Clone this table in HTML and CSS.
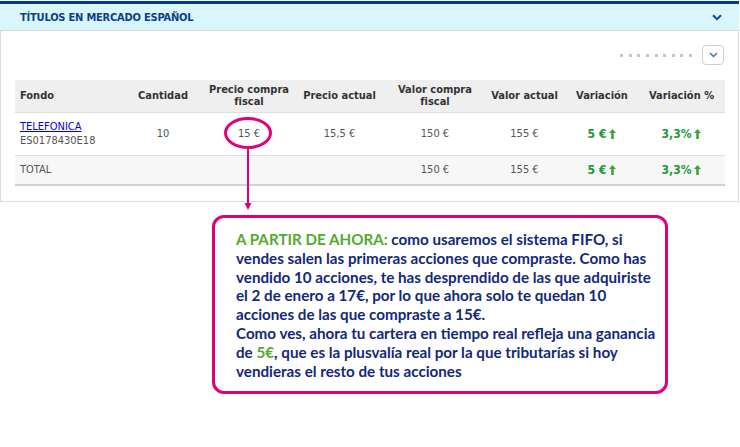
FILE: index.html
```html
<!DOCTYPE html>
<html lang="es">
<head>
<meta charset="utf-8">
<title>Títulos en mercado español</title>
<link rel="stylesheet" href="styles.css">
</head>
<body>
<div class="page">
  <section class="panel">
    <header class="panel-head">
      <h2 class="panel-title">TÍTULOS EN MERCADO ESPAÑOL</h2>
      <svg class="head-chevron" width="10" height="7" viewBox="0 0 10 7"><path d="M1 1.2 L5 5.2 L9 1.2" fill="none" stroke="#0a4a9c" stroke-width="2"/></svg>
    </header>
    <div class="panel-body">
      <div class="tools">
        <div class="dots"><span></span><span></span><span></span><span></span><span></span><span></span><span></span><span></span><span></span></div>
        <div class="drop"><svg width="9" height="6" viewBox="0 0 9 6"><path d="M1 1 L4.5 4.5 L8 1" fill="none" stroke="#3a6fb0" stroke-width="1.4"/></svg></div>
      </div>
      <table class="grid">
        <colgroup>
          <col class="c1"><col class="c2"><col class="c3"><col class="c4"><col class="c5"><col class="c6"><col class="c7"><col class="c8">
        </colgroup>
        <thead>
          <tr>
            <th class="left">Fondo</th>
            <th>Cantidad</th>
            <th>Precio compra<br>fiscal</th>
            <th>Precio actual</th>
            <th>Valor compra<br>fiscal</th>
            <th>Valor actual</th>
            <th>Variación</th>
            <th>Variación %</th>
          </tr>
        </thead>
        <tbody>
          <tr class="row-main">
            <td class="left"><a href="#" class="fund">TELEFONICA</a><div class="isin">ES0178430E18</div></td>
            <td>10</td>
            <td>15 €</td>
            <td>15,5 €</td>
            <td>150 €</td>
            <td>155 €</td>
            <td class="up">5 €<svg class="arrow" width="7" height="10" viewBox="0 0 7 10"><path d="M3.5 0 L7 4 L4.8 4 L4.8 10 L2.2 10 L2.2 4 L0 4 Z" fill="#3fa535"/></svg></td>
            <td class="up">3,3%<svg class="arrow" width="7" height="10" viewBox="0 0 7 10"><path d="M3.5 0 L7 4 L4.8 4 L4.8 10 L2.2 10 L2.2 4 L0 4 Z" fill="#3fa535"/></svg></td>
          </tr>
          <tr class="row-total">
            <td class="left">TOTAL</td>
            <td></td>
            <td></td>
            <td></td>
            <td>150 €</td>
            <td>155 €</td>
            <td class="up">5 €<svg class="arrow" width="7" height="10" viewBox="0 0 7 10"><path d="M3.5 0 L7 4 L4.8 4 L4.8 10 L2.2 10 L2.2 4 L0 4 Z" fill="#3fa535"/></svg></td>
            <td class="up">3,3%<svg class="arrow" width="7" height="10" viewBox="0 0 7 10"><path d="M3.5 0 L7 4 L4.8 4 L4.8 10 L2.2 10 L2.2 4 L0 4 Z" fill="#3fa535"/></svg></td>
          </tr>
        </tbody>
      </table>
    </div>
  </section>

  <div class="callout">
    <p><span class="hl">A PARTIR DE AHORA:</span> como usaremos el sistema FIFO, si<br>vendes salen las primeras acciones que compraste. Como has<br>vendido 10 acciones, te has desprendido de las que adquiriste<br>el 2 de enero a 17€, por lo que ahora solo te quedan 10<br>acciones de las que compraste a 15€.</p>
    <p>Como ves, ahora tu cartera en tiempo real refleja una ganancia<br>de <span class="hl">5€</span>, que es la plusvalía real por la que tributarías si hoy<br>vendieras el resto de tus acciones</p>
  </div>

  <svg class="annot" width="60" height="100" viewBox="0 0 60 100">
    <ellipse cx="24" cy="16" rx="22.5" ry="14.5" fill="none" stroke="#e2007a" stroke-width="3"/>
    <line x1="24" y1="31" x2="24" y2="88" stroke="#e2007a" stroke-width="2"/>
    <path d="M20.5 86 L27.5 86 L24 93 Z" fill="#e2007a"/>
  </svg>
</div>
</body>
</html>
```

FILE: styles.css
```css
* { box-sizing: border-box; }
html, body { margin: 0; padding: 0; background: #fff; }
body { padding-top: 1px; }

.page {
  position: relative;
  width: 740px;
  height: 446px;
}

.panel { width: 739px; }

.panel-head {
  display: flex;
  align-items: center;
  justify-content: space-between;
  height: 30px;
  background: #d9f6fc;
  border-top: 3px solid #003b8c;
  border-bottom: 1px solid #dadada;
  padding: 0 17px 0 20px;
}

.panel-title {
  margin: 0;
  font-family: "DejaVu Sans Condensed", "DejaVu Sans", sans-serif;
  font-weight: bold;
  font-size: 11px;
  color: #0b3f8a;
  letter-spacing: -0.2px;
}

.head-chevron { display: block; margin-top: 1px; }

.panel-body {
  border: 1px solid #dcdcdc;
  border-top: none;
  padding: 14px 13px 15px 14px;
}

.tools {
  display: flex;
  justify-content: flex-end;
  align-items: center;
  gap: 10px;
  height: 20px;
  margin-bottom: 15px;
}

.dots {
  display: flex;
  gap: 5.6px;
  margin-top: 1px;
}
.dots span {
  width: 3px;
  height: 3px;
  background: #c4c4c4;
}

.drop {
  width: 22px;
  height: 20px;
  border: 1px solid #cfcfcf;
  border-radius: 4px;
  display: flex;
  align-items: center;
  justify-content: center;
  margin-right: 1px;
}
.drop svg { display: block; }

.grid {
  width: 710px;
  border-collapse: collapse;
  table-layout: fixed;
  font-family: "DejaVu Sans Condensed", "DejaVu Sans", sans-serif;
  font-size: 11px;
}
.c1 { width: 105px; }
.c2 { width: 86px; }
.c3 { width: 86px; }
.c4 { width: 95px; }
.c5 { width: 96px; }
.c6 { width: 83px; }
.c7 { width: 72px; }
.c8 { width: 87px; }

.grid th {
  background: #efefef;
  height: 32px;
  color: #333;
  font-weight: bold;
  text-align: center;
  line-height: 12px;
  padding: 0;
  border-bottom: 1px solid #dddddd;
}
.grid td {
  text-align: center;
  color: #555;
  padding: 0;
}
.grid .left { text-align: left; padding-left: 5px; }

.row-main td { height: 43px; border-bottom: 1px solid #dddddd; }
.row-total td { height: 30px; background: #f7f7f7; border-bottom: 2px solid #d2d2d2; }

.fund {
  color: #0000ee;
  text-decoration: underline;
  display: block;
  line-height: 14px;
  margin-top: 1px;
}
.isin { line-height: 14px; color: #555; }

.grid td.up {
  color: #1a9a3a;
  font-weight: bold;
  font-size: 12px;
}
.arrow {
  display: inline-block;
  vertical-align: -1px;
  margin-left: 3px;
}

.callout {
  margin: 13px 0 0 212px;
  width: 456px;
  height: 179px;
  border: 3px solid #e2007a;
  border-radius: 12px;
  padding: 12px 6px 0 21px;
  font-family: "Lato", sans-serif;
  font-weight: bold;
  font-size: 15.2px;
  line-height: 18.8px;
  color: #13287a;
}
.callout p { margin: 0; white-space: nowrap; }
.hl { color: #55a92d; }

.annot {
  position: absolute;
  left: 224px;
  top: 116px;
}
```
